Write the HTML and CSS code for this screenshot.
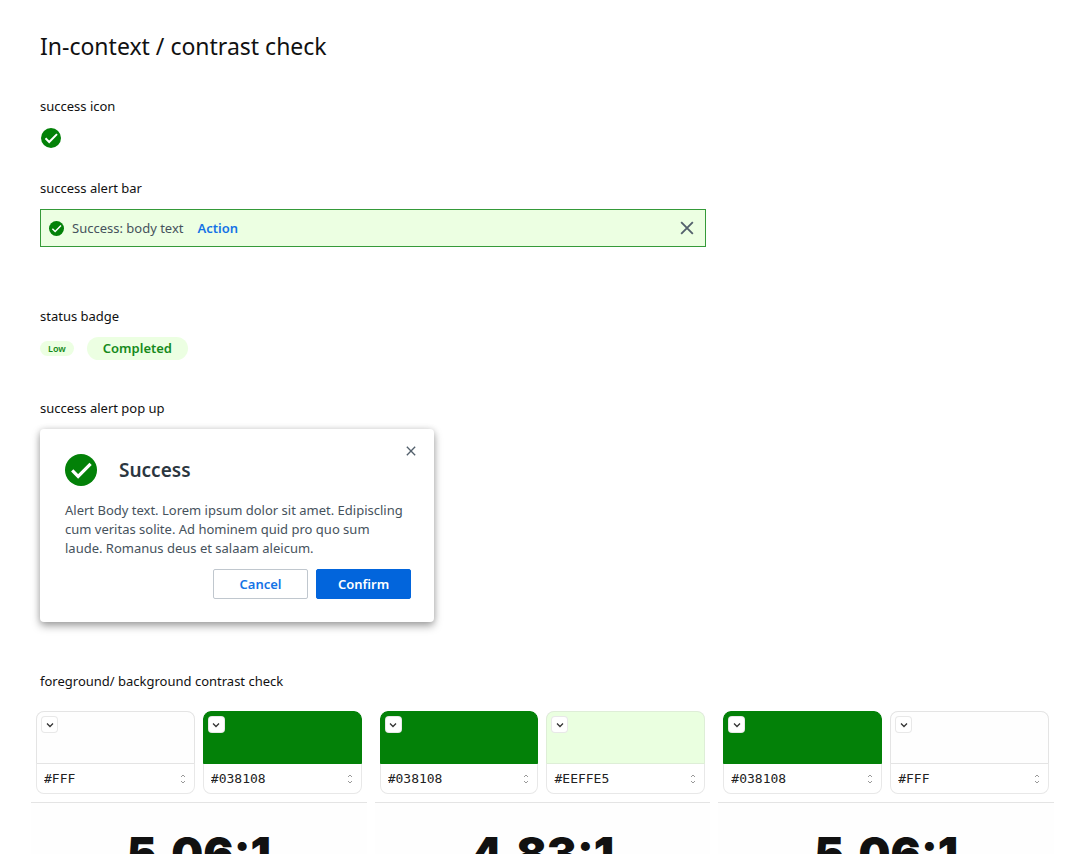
FILE: index.html
```html
<!DOCTYPE html>
<html lang="en">
<head>
  <meta charset="UTF-8" />
  <meta name="viewport" content="width=device-width, initial-scale=1.0" />
  <title>In-context / contrast check</title>
  <link rel="stylesheet" href="styles.css">
</head>

<body>
  <!-- shared icons -->
  <svg class="sprite" aria-hidden="true">
    <symbol id="check" viewBox="2 2 20 20">
      <circle cx="12" cy="12" r="10" fill="#038108" />
      <path d="M6.5 12.3l3.7 3.7 7.8-7.9" fill="none" stroke="#fff" stroke-width="2" />
    </symbol>
    <symbol id="close" viewBox="0 0 12 12">
      <path d="M1 1l10 10M11 1L1 11" fill="none" stroke="currentColor" stroke-width="1.6" />
    </symbol>
    <symbol id="chevron" viewBox="0 0 8 8">
      <path d="M1 2.5l3 3 3-3" fill="none" stroke="#333" stroke-width="1.3" />
    </symbol>
    <symbol id="stepper" viewBox="0 0 6 10">
      <path d="M1 3l2-2 2 2M1 7l2 2 2-2" fill="none" stroke="#999" stroke-width="1" />
    </symbol>
  </svg>

  <main class="page">
    <h1>In-context / contrast check</h1>

    <section class="icon-section">
      <h2>success icon</h2>
      <svg class="success-icon" role="img" aria-label="Success"><use href="#check" /></svg>
    </section>

    <section class="bar-section">
      <h2>success alert bar</h2>
      <div class="alert-bar" role="status">
        <svg class="alert-icon"><use href="#check" /></svg>
        <span>Success: body text</span>
        <a href="#action">Action</a>
        <button type="button" class="alert-close" aria-label="Close alert"><svg><use href="#close" /></svg></button>
      </div>
    </section>

    <section class="badge-section">
      <h2>status badge</h2>
      <div class="badges">
        <span class="badge badge-small">Low</span>
        <span class="badge">Completed</span>
      </div>
    </section>

    <section class="popup-section">
      <h2>success alert pop up</h2>
      <div class="popup" role="dialog" aria-labelledby="popup-title">
        <button type="button" class="popup-close" aria-label="Close"><svg><use href="#close" /></svg></button>
        <div class="popup-head">
          <svg class="popup-icon"><use href="#check" /></svg>
          <h3 id="popup-title">Success</h3>
        </div>
        <p>Alert Body text. Lorem ipsum dolor sit amet. Edipiscling cum veritas solite. Ad hominem quid pro quo sum laude. Romanus deus et salaam aleicum.</p>
        <div class="popup-actions">
          <button type="button" class="btn">Cancel</button>
          <button type="button" class="btn btn-primary">Confirm</button>
        </div>
      </div>
    </section>

    <section class="contrast-section">
      <h2>foreground/ background contrast check</h2>
      <div class="checks">
        <div class="check">
          <div class="swatches">
            <div class="swatch">
              <div class="color white"><button type="button" aria-label="Pick foreground"><svg><use href="#chevron" /></svg></button></div>
              <div class="value"><input type="text" value="#FFF" aria-label="Foreground"><svg><use href="#stepper" /></svg></div>
            </div>
            <div class="swatch">
              <div class="color green"><button type="button" aria-label="Pick background"><svg><use href="#chevron" /></svg></button></div>
              <div class="value"><input type="text" value="#038108" aria-label="Background"><svg><use href="#stepper" /></svg></div>
            </div>
          </div>
          <div class="ratio">5.06:1</div>
        </div>

        <div class="check">
          <div class="swatches">
            <div class="swatch">
              <div class="color green"><button type="button" aria-label="Pick foreground"><svg><use href="#chevron" /></svg></button></div>
              <div class="value"><input type="text" value="#038108" aria-label="Foreground"><svg><use href="#stepper" /></svg></div>
            </div>
            <div class="swatch">
              <div class="color mint"><button type="button" aria-label="Pick background"><svg><use href="#chevron" /></svg></button></div>
              <div class="value"><input type="text" value="#EEFFE5" aria-label="Background"><svg><use href="#stepper" /></svg></div>
            </div>
          </div>
          <div class="ratio">4.83:1</div>
        </div>

        <div class="check">
          <div class="swatches">
            <div class="swatch">
              <div class="color green"><button type="button" aria-label="Pick foreground"><svg><use href="#chevron" /></svg></button></div>
              <div class="value"><input type="text" value="#038108" aria-label="Foreground"><svg><use href="#stepper" /></svg></div>
            </div>
            <div class="swatch">
              <div class="color white"><button type="button" aria-label="Pick background"><svg><use href="#chevron" /></svg></button></div>
              <div class="value"><input type="text" value="#FFF" aria-label="Background"><svg><use href="#stepper" /></svg></div>
            </div>
          </div>
          <div class="ratio">5.06:1</div>
        </div>
      </div>
    </section>
  </main>
</body>
</html>
```
FILE: styles.css
```css
* {
  box-sizing: border-box;
}

body {
  margin: 0;
  height: 100vh;
  overflow: hidden;
  background: #fff;
  color: #111;
  font-family: "Noto Sans", sans-serif;
  font-size: 13px;
  line-height: 20px;
}

h1, h2, h3, p {
  margin: 0;
}

button, input {
  font: inherit;
  padding: 0;
  border: none;
  background: none;
}

button {
  cursor: pointer;
}

svg {
  display: block;
  flex-shrink: 0;
}

.sprite {
  display: none;
}

.page {
  padding: 30px 26px 0 40px;
}

h1 {
  font-size: 23px;
  font-weight: 400;
  line-height: 32px;
}

h2 {
  font-size: 13px;
  font-weight: 400;
  margin-bottom: 11px;
}

.icon-section {
  margin-top: 34px;
}

.success-icon {
  width: 20px;
  height: 20px;
  margin: 12px 1px 0;
}

.bar-section {
  margin-top: 30px;
}

.alert-bar {
  display: flex;
  align-items: center;
  max-width: 666px;
  height: 38px;
  padding: 0 11px 0 8px;
  border: 1px solid #359a39;
  background: #ecffe2;
  color: #46525c;
}

.alert-icon {
  width: 15px;
  height: 15px;
  margin-right: 8px;
}

.alert-bar a {
  margin-left: 14px;
  color: #1473e6;
  font-weight: 600;
  text-decoration: none;
}

.alert-close {
  margin-left: auto;
  color: #53606c;
}

.alert-close svg {
  width: 14px;
  height: 14px;
}

.badge-section {
  margin-top: 59px;
}

.badges {
  display: flex;
  align-items: center;
  gap: 13px;
}

.badge {
  padding: 0 16px;
  border-radius: 12px;
  background: #ecffe2;
  color: #168a1b;
  font-weight: 600;
  line-height: 23px;
}

.badge-small {
  padding: 0 8px;
  font-size: 9px;
  line-height: 15px;
}

.popup-section {
  margin-top: 38px;
}

.popup {
  position: relative;
  max-width: 394px;
  padding: 25px 23px 23px 25px;
  border-radius: 4px;
  background: #fff;
  box-shadow: 0 4px 8px rgba(0, 0, 0, 0.35), 0 0 6px rgba(0, 0, 0, 0.12);
}

.popup-close {
  position: absolute;
  top: 17px;
  right: 18px;
  color: #53606c;
}

.popup-close svg {
  width: 10px;
  height: 10px;
}

.popup-head {
  display: flex;
  align-items: center;
  gap: 22px;
  margin-bottom: 15px;
}

.popup-icon {
  width: 32px;
  height: 32px;
}

h3 {
  color: #2b3640;
  font-size: 19px;
  font-weight: 600;
  line-height: 32px;
}

.popup p {
  padding-right: 5px;
  color: #46525c;
  line-height: 19px;
}

.popup-actions {
  display: flex;
  justify-content: flex-end;
  gap: 8px;
  margin-top: 11px;
}

.btn {
  width: 95px;
  height: 30px;
  border: 1px solid #c0c7ce;
  border-radius: 2px;
  color: #1473e6;
  font-weight: 600;
}

.btn-primary {
  border-color: #0265dc;
  background: #0265dc;
  color: #fff;
}

.contrast-section {
  margin-top: 49px;
}

.checks {
  display: grid;
  grid-template-columns: repeat(3, 1fr);
  gap: 8px;
  margin: 20px 0 0 -9px;
}

.swatches {
  display: grid;
  grid-template-columns: 1fr 1fr;
  gap: 8px;
  padding: 0 5px 8px;
  border-bottom: 1px solid #e4e4e4;
}

.swatch {
  overflow: hidden;
  border-radius: 8px;
  box-shadow: inset 0 0 0 1px #e8e8e8;
}

.color {
  height: 53px;
  padding: 5px;
  border: 1px solid #e4e4e4;
  border-radius: 8px 8px 0 0;
}

.green {
  border-color: #038108;
  background: #038108;
}

.mint {
  border-color: #deeed7;
  background: #eaffe0;
}

.white {
  background: #fefefe;
}

.color button {
  display: flex;
  align-items: center;
  justify-content: center;
  width: 15px;
  height: 15px;
  border-radius: 3px;
  background: #fff;
  box-shadow: 0 0 0 1px #e8e8e8;
}

.color button svg {
  width: 8px;
  height: 8px;
}

.value {
  display: flex;
  align-items: center;
  height: 30px;
  padding: 0 9px 0 8px;
}

.value input {
  flex: 1;
  min-width: 0;
  color: #222;
  font-family: "DejaVu Sans Mono", monospace;
}

.value svg {
  width: 6px;
  height: 10px;
}

.ratio {
  padding-top: 23px;
  background: #fefefe;
  color: #111;
  font-family: Inter, sans-serif;
  font-size: 45px;
  font-weight: 900;
  line-height: 56px;
  text-align: center;
}
```
